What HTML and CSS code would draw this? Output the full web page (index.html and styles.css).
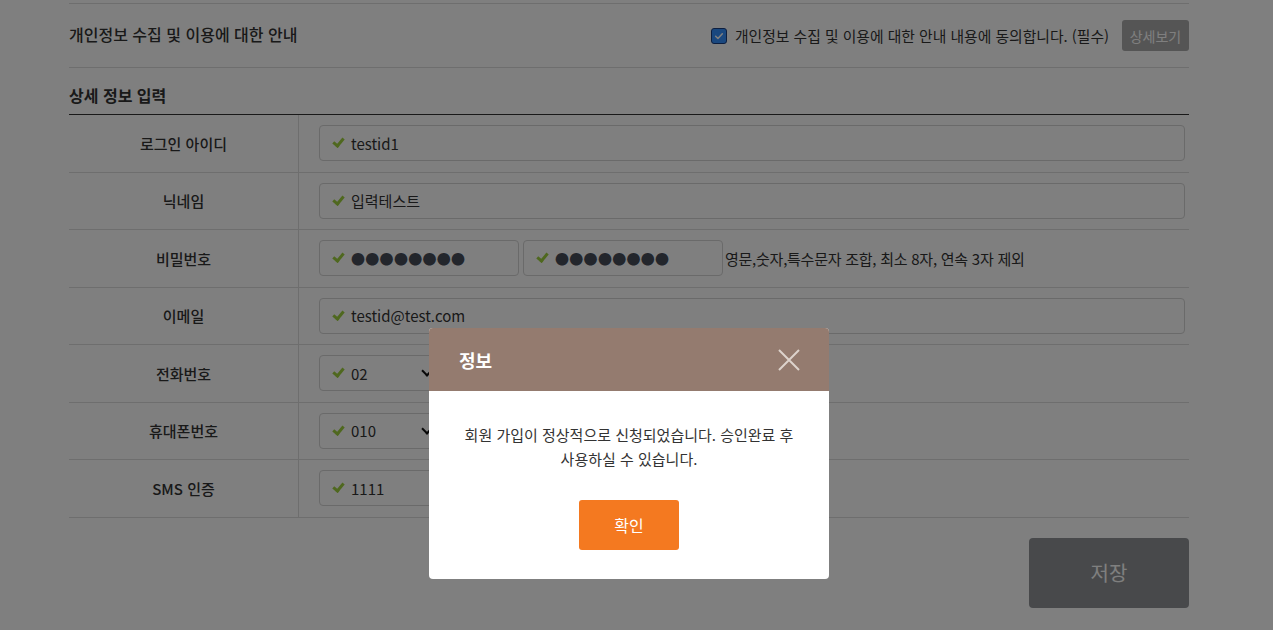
FILE: index.html
```html
<!DOCTYPE html>
<html lang="ko">
<head>
<meta charset="utf-8">
<link rel="stylesheet" href="styles.css">
</head>
<body>
<div class="page">
  <section class="agree">
    <h3 class="agree-title">개인정보 수집 및 이용에 대한 안내</h3>
    <div class="agree-right">
      <span class="checkbox"><svg viewBox="0 0 16 16" width="16" height="16"><path d="M4.2 8.3 L6.8 10.8 L11.8 5.4" fill="none" stroke="#fff" stroke-width="1.8" stroke-linecap="round" stroke-linejoin="round"/></svg></span>
      <span class="agree-text">개인정보 수집 및 이용에 대한 안내 내용에 동의합니다. (필수)</span>
      <button class="btn-detail">상세보기</button>
    </div>
  </section>

  <h3 class="sec-title">상세 정보 입력</h3>
  <div class="form-table">
    <div class="row">
      <div class="label">로그인 아이디</div>
      <div class="cell"><div class="input full"><span class="chk"></span><span class="val">testid1</span></div></div>
    </div>
    <div class="row">
      <div class="label">닉네임</div>
      <div class="cell"><div class="input full"><span class="chk"></span><span class="val">입력테스트</span></div></div>
    </div>
    <div class="row">
      <div class="label">비밀번호</div>
      <div class="cell">
        <div class="input pw"><span class="chk"></span><span class="val dots">●●●●●●●●</span></div>
        <div class="input pw"><span class="chk"></span><span class="val dots">●●●●●●●●</span></div>
        <span class="hint">영문,숫자,특수문자 조합, 최소 8자, 연속 3자 제외</span>
      </div>
    </div>
    <div class="row">
      <div class="label">이메일</div>
      <div class="cell"><div class="input full"><span class="chk"></span><span class="val">testid@test.com</span></div></div>
    </div>
    <div class="row">
      <div class="label">전화번호</div>
      <div class="cell"><div class="input sel"><span class="chk"></span><span class="val">02</span><span class="chev"></span></div></div>
    </div>
    <div class="row">
      <div class="label">휴대폰번호</div>
      <div class="cell"><div class="input sel"><span class="chk"></span><span class="val">010</span><span class="chev"></span></div></div>
    </div>
    <div class="row">
      <div class="label">SMS 인증</div>
      <div class="cell"><div class="input sms"><span class="chk"></span><span class="val">1111</span></div></div>
    </div>
  </div>
  <div class="actions">
    <button class="btn-save">저장</button>
  </div>
</div>

<div class="overlay"></div>
<div class="modal">
  <div class="modal-head">
    <span class="modal-title">정보</span>
    <svg class="close" viewBox="0 0 22 22" width="22" height="22"><path d="M1 1 L21 21 M21 1 L1 21" stroke="#ddd3cc" stroke-width="2" fill="none"/></svg>
  </div>
  <div class="modal-body">
    <p class="msg">회원 가입이 정상적으로 신청되었습니다. 승인완료 후<br>사용하실 수 있습니다.</p>
    <button class="btn-ok">확인</button>
  </div>
</div>
</body>
</html>
```

FILE: styles.css
```css
* { box-sizing: border-box; }
html, body { margin: 0; padding: 0; }
body {
  background: #fff;
  font-family: "Noto Sans CJK KR", "Noto Sans", sans-serif;
  color: #333;
  width: 1273px;
  height: 630px;
  overflow: hidden;
}
.page {
  width: 1120px;
  margin-left: 69px;
  padding-top: 3px;
}
.agree {
  display: flex;
  align-items: center;
  justify-content: space-between;
  height: 65px;
  border-top: 1px solid #dcdcdc;
  border-bottom: 1px solid #dcdcdc;
}
.agree-title {
  margin: 0;
  font-size: 16px;
  font-weight: 500;
  position: relative;
  top: -2px;
}
.agree-right {
  display: flex;
  align-items: center;
}
.checkbox {
  width: 16px;
  height: 16px;
  border-radius: 3px;
  background: #3490ff;
  border: 1px solid #1b3f80;
  display: flex;
  align-items: center;
  justify-content: center;
  margin-right: 8px;
}
.checkbox svg { display: block; }
.agree-text {
  font-size: 14.8px;
  color: #333;
}
.btn-detail {
  margin-left: 13px;
  width: 67px;
  height: 31px;
  border: 0;
  border-radius: 3px;
  background: #aaa;
  color: #fff;
  font-family: inherit;
  font-size: 14px;
  padding: 0;
}
.sec-title {
  margin: 0;
  height: 47px;
  font-size: 16px;
  font-weight: 700;
  display: flex;
  align-items: center;
  padding-top: 8px;
  border-bottom: 1px solid #333;
}
.form-table {
  display: flex;
  flex-direction: column;
}
.row {
  display: flex;
  height: 57.5px;
  border-bottom: 1px solid #dcdcdc;
}
.label {
  width: 230px;
  border-right: 1px solid #dcdcdc;
  display: flex;
  align-items: center;
  justify-content: center;
  font-size: 15px;
  font-weight: 500;
  color: #333;
}
.cell {
  flex: 1;
  display: flex;
  align-items: center;
  padding-left: 20px;
  padding-right: 4px;
}
.input {
  height: 36px;
  border: 1px solid #d4d4d4;
  border-radius: 4px;
  background: #fff;
  display: flex;
  align-items: center;
  padding-left: 11px;
  position: relative;
}
.input.full { flex: 1; }
.input.pw { width: 200px; margin-right: 4px; }
.input.sel { width: 121px; }
.input.sms { width: 200px; }
.chk {
  width: 13px;
  height: 10px;
  margin-right: 7px;
  position: relative;
  top: -1px;
}
.chk::before {
  content: "";
  position: absolute;
  top: -1px;
  left: 4px;
  width: 4px;
  height: 8px;
  border-right: 3px solid #9fd13f;
  border-bottom: 3px solid #9fd13f;
  transform: rotate(40deg);
  transform-origin: center;
}
.val {
  font-size: 15px;
  color: #333;
}
.dots {
  font-size: 14px;
  letter-spacing: 0.3px;
  color: #474c58;
}
.chev {
  position: absolute;
  right: 8px;
  top: 11px;
  width: 8px;
  height: 8px;
  border-right: 2px solid #111;
  border-bottom: 2px solid #111;
  transform: rotate(45deg);
}
.hint {
  margin-left: -2px;
  font-size: 15px;
  color: #333;
  letter-spacing: -0.25px;
}
.actions {
  display: flex;
  justify-content: flex-end;
  padding-top: 20px;
}
.btn-save {
  width: 160px;
  height: 70px;
  border: 0;
  border-radius: 4px;
  background: #909396;
  color: #fff;
  font-family: inherit;
  font-size: 20px;
  padding: 0;
}
.overlay {
  position: fixed;
  inset: 0;
  background: rgba(0, 0, 0, 0.5);
}
.modal {
  position: fixed;
  left: 429px;
  top: 328px;
  width: 400px;
  height: 251px;
  background: #fff;
  border-radius: 4px;
  overflow: hidden;
}
.modal-head {
  height: 63px;
  background: #947b6f;
  display: flex;
  align-items: center;
  justify-content: space-between;
  padding: 0 29px 0 30px;
}
.modal-title {
  color: #fff;
  font-size: 18px;
  font-weight: 700;
}
.close { display: block; }
.modal-body {
  display: flex;
  flex-direction: column;
  align-items: center;
  padding-top: 32px;
}
.msg {
  margin: 0;
  font-size: 15px;
  line-height: 24px;
  color: #333;
  text-align: center;
}
.btn-ok {
  margin-top: 29px;
  width: 100px;
  height: 50px;
  border: 0;
  border-radius: 3px;
  background: #f47920;
  color: #fff;
  font-family: inherit;
  font-size: 16px;
  padding: 0;
}
```
